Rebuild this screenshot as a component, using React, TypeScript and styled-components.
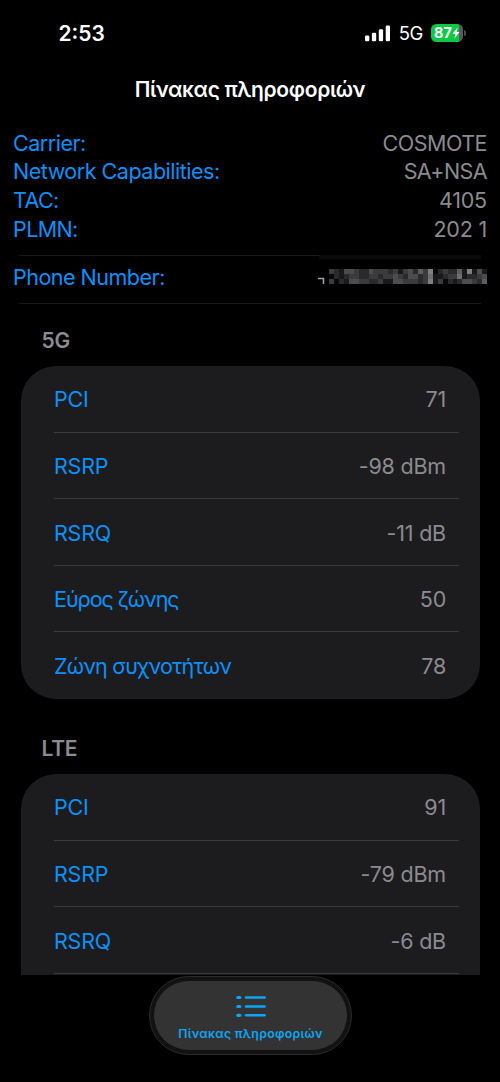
import React from 'react';
import styled, { createGlobalStyle } from 'styled-components';

const GlobalStyle = createGlobalStyle`
  * { box-sizing: border-box; }
  html, body { margin: 0; background: #000; }
  body { font-family: Inter, "Liberation Sans", sans-serif; overflow: hidden; }
`;

const Screen = styled.div`
  position: relative;
  width: 500px;
  height: 1082px;
  background: #000;
  display: flex;
  flex-direction: column;
  overflow: hidden;
`;

const StatusBar = styled.header`
  height: 66px;
  flex: none;
  padding: 0 34px 0 58.5px;
  display: flex;
  align-items: center;
  justify-content: space-between;
  color: #fff;
`;

const Clock = styled.span`
  font-size: 21px;
  font-weight: 600;
`;

const Indicators = styled.div`
  display: flex;
  align-items: center;
`;

const NetworkType = styled.span`
  font-size: 18.5px;
  line-height: 22px;
  margin: 0 8.5px 0 8px;
  letter-spacing: -0.7px;
`;

const Battery = styled.div`
  display: flex;
  align-items: center;
  gap: 1px;
`;

const BatteryBody = styled.div`
  width: 32px;
  height: 18px;
  border-radius: 5.5px;
  background: linear-gradient(90deg, #0cc845 87%, #5a5a5e 87%);
  display: flex;
  align-items: center;
  justify-content: center;
  font-size: 14.5px;
  font-weight: 700;
  line-height: 18px;
`;

const BatteryCap = styled.div`
  width: 2px;
  height: 6px;
  border-radius: 0 2px 2px 0;
  background: #4a4a4c;
`;

const Title = styled.h1`
  margin: 0;
  height: 46px;
  flex: none;
  line-height: 47px;
  text-align: center;
  color: #fff;
  font-size: 21px;
  font-weight: 600;
  letter-spacing: -0.33px;
`;

const InfoList = styled.section`
  padding: 16.6px 13px 0;
  flex: none;
`;

const InfoRow = styled.div<{ $height?: number; $lift?: number }>`
  height: ${({ $height = 28.6 }) => $height}px;
  padding-bottom: ${({ $lift = 0 }) => $lift}px;
  display: flex;
  align-items: center;
  justify-content: space-between;
`;

const Label = styled.span<{ $spacing?: number }>`
  color: #0a91fa;
  font-size: 21.5px;
  white-space: nowrap;
  letter-spacing: ${({ $spacing = -0.48 }) => $spacing}px;
`;

const Value = styled.span<{ $spacing?: number }>`
  color: #8b8b90;
  font-size: 21.5px;
  white-space: nowrap;
  letter-spacing: ${({ $spacing = -0.2 }) => $spacing}px;
`;

const Separator = styled.div`
  height: 1px;
  margin: 0 6px;
  background: #19191a;
`;

const ShadedSeparator = styled.div`
  height: 6px;
  margin: 12px 6px 0;
  display: flex;
  align-items: flex-start;
`;

const ThinLine = styled.div`
  width: 300px;
  height: 1px;
  background: #19191a;
`;

const ThickLine = styled.div`
  flex: 1;
  height: 4px;
  background: #0b0b0b;
`;

const Scroller = styled.main`
  height: 671px;
  flex: none;
  overflow: hidden;
  padding: 0 20.5px;
`;

const GroupTitle = styled.h2<{ $height: number; $top: number }>`
  margin: 0;
  height: ${({ $height }) => $height}px;
  padding: ${({ $top }) => $top}px 0 0 21px;
  line-height: 26px;
  color: #8b8b90;
  font-size: 21px;
  font-weight: 600;
  letter-spacing: -0.3px;
`;

const Card = styled.div<{ $continues?: boolean }>`
  background: #1c1c1e;
  border-radius: ${({ $continues }) => ($continues ? '35px 35px 0 0' : '35px')};
  padding: 0 20.5px ${({ $continues }) => ($continues ? 6 : 0)}px 33px;
`;

const CardRow = styled.div<{ $line: boolean }>`
  height: 66.6px;
  padding: 1.2px 13px 0 0.5px;
  display: flex;
  align-items: center;
  justify-content: space-between;
  border-bottom: ${({ $line }) => ($line ? '1px solid #3a3a3c' : 'none')};
`;

const TabBar = styled.nav`
  position: absolute;
  left: 149px;
  top: 976px;
  width: 203px;
  height: 79px;
  padding: 4px;
  border-radius: 40px;
  background: #121212;
  border: 1px solid #2b2b2b;
`;

const Tab = styled.div`
  height: 100%;
  border-radius: 35px;
  background: #333;
  display: flex;
  flex-direction: column;
  align-items: center;
  padding-top: 14px;
`;

const TabLabel = styled.span`
  margin-top: 7px;
  color: #0ea5f5;
  font-size: 12.3px;
  line-height: 16px;
  font-weight: 600;
  white-space: nowrap;
  letter-spacing: 0.3px;
`;

const SignalIcon = () => (
  <svg width="26" height="17" viewBox="0 0 26 17" fill="#fff">
    <rect x="0" y="10.5" width="4.3" height="5.8" rx="1.3" />
    <rect x="6.9" y="7.7" width="4.3" height="8.6" rx="1.3" />
    <rect x="13.8" y="4.3" width="4.3" height="12" rx="1.3" />
    <rect x="20.7" y="0.5" width="4.3" height="15.8" rx="1.3" />
  </svg>
);

const BoltIcon = () => (
  <svg width="8" height="12" viewBox="0 0 8 12" fill="#fff">
    <path d="M5.6 0.4 0.5 6.7h2.9L2.4 11.6 7.6 5.1H4.7z" />
  </svg>
);

const ListIcon = () => (
  <svg width="30" height="24" viewBox="0 0 30 24" fill="none" stroke="#0ea5f5" strokeLinecap="round">
    {[2.5, 11.5, 20.3].map((y) => (
      <React.Fragment key={y}>
        <path d={`M1.8 ${y}h2`} strokeWidth="3.2" />
        <path d={`M10 ${y}h18.6`} strokeWidth="2.5" />
      </React.Fragment>
    ))}
  </svg>
);

// Grey levels of the censored phone number, one digit per mosaic cell.
const mosaic = [
  '32144322433323134253702322517141',
  '02123322332334324423611233612234',
  '30214433223114433323713021244325',
];

const CensoredNumber = () => (
  <svg width="171" height="16" viewBox="0 0 171 16" shapeRendering="crispEdges">
    <path d="M2 9.5h6M7.5 9v6" stroke="#a0a0a2" strokeWidth="1.6" shapeRendering="auto" fill="none" />
    {mosaic.map((row, y) =>
      [...row].map((level, x) => {
        const c = Number(level) * 17 + 8;
        return <rect key={`${x}-${y}`} x={13 + x * 4.94} y={y * 5} width="5" height="5" fill={`rgb(${c},${c},${c + 2})`} />;
      }),
    )}
  </svg>
);

type Row = { label: string; value: string; spacing?: number };
type Group = { title: string; height: number; top: number; continues?: boolean; rows: Row[] };

const groups: Group[] = [
  {
    title: '5G',
    height: 62,
    top: 24,
    rows: [
      { label: 'PCI', value: '71' },
      { label: 'RSRP', value: '-98 dBm' },
      { label: 'RSRQ', value: '-11 dB' },
      { label: 'Εύρος ζώνης', value: '50', spacing: -1.02 },
      { label: 'Ζώνη συχνοτήτων', value: '78', spacing: -0.8 },
    ],
  },
  {
    title: 'LTE',
    height: 75,
    top: 37,
    continues: true,
    rows: [
      { label: 'PCI', value: '91' },
      { label: 'RSRP', value: '-79 dBm' },
      { label: 'RSRQ', value: '-6 dB' },
    ],
  },
];

export default function App() {
  return (
    <Screen>
      <GlobalStyle />
      <StatusBar>
        <Clock>2:53</Clock>
        <Indicators>
          <SignalIcon />
          <NetworkType>5G</NetworkType>
          <Battery>
            <BatteryBody>87<BoltIcon /></BatteryBody>
            <BatteryCap />
          </Battery>
        </Indicators>
      </StatusBar>
      <Title>Πίνακας πληροφοριών</Title>
      <InfoList>
        <InfoRow><Label>Carrier:</Label><Value $spacing={-0.5}>COSMOTE</Value></InfoRow>
        <InfoRow><Label>Network Capabilities:</Label><Value $spacing={-0.6}>SA+NSA</Value></InfoRow>
        <InfoRow><Label $spacing={-0.6}>TAC:</Label><Value>4105</Value></InfoRow>
        <InfoRow><Label $spacing={-0.6}>PLMN:</Label><Value>202 1</Value></InfoRow>
        <ShadedSeparator><ThinLine /><ThickLine /></ShadedSeparator>
        <InfoRow $height={42} $lift={9}><Label $spacing={-0.5}>Phone Number:</Label><CensoredNumber /></InfoRow>
        <Separator />
      </InfoList>
      <Scroller>
        {groups.map((g) => (
          <React.Fragment key={g.title}>
            <GroupTitle $height={g.height} $top={g.top}>{g.title}</GroupTitle>
            <Card $continues={g.continues}>
              {g.rows.map((row, i) => (
                <CardRow key={row.label} $line={!!g.continues || i < g.rows.length - 1}>
                  <Label $spacing={row.spacing ?? -0.25}>{row.label}</Label>
                  <Value>{row.value}</Value>
                </CardRow>
              ))}
            </Card>
          </React.Fragment>
        ))}
      </Scroller>
      <TabBar>
        <Tab>
          <ListIcon />
          <TabLabel>Πίνακας πληροφοριών</TabLabel>
        </Tab>
      </TabBar>
    </Screen>
  );
}
